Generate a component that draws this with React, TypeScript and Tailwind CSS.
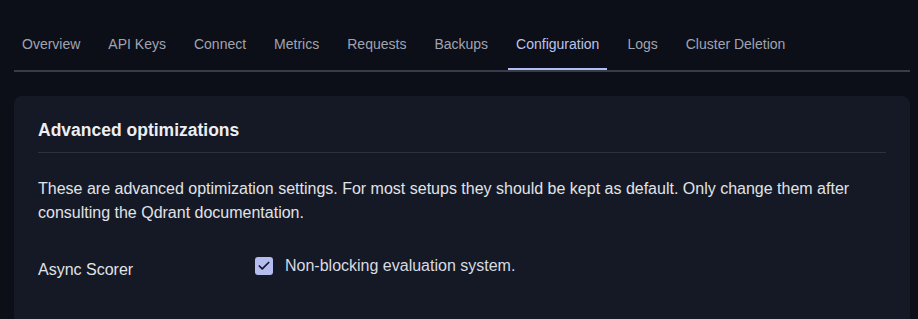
import { Check } from "lucide-react";

const tabs = [
  "Overview",
  "API Keys",
  "Connect",
  "Metrics",
  "Requests",
  "Backups",
  "Configuration",
  "Logs",
  "Cluster Deletion",
];

export default function App() {
  const active = "Configuration";

  return (
    <div
      className="min-h-screen bg-[#0c0e18] pl-[14px] pr-[8px] pt-5 text-[#e4e6ec]"
      style={{ fontFamily: '"Liberation Sans", Arial, sans-serif' }}
    >
      {/* tabs */}
      <nav className="flex gap-3 border-b-2 border-[#383c49]">
        {tabs.map((t) => (
          <button
            key={t}
            className={`border-b-2 px-2 pb-[14px] pt-[14px] text-sm leading-5 ${
              t === active
                ? "border-[#b5bdf0] text-[#bcc4ec]"
                : "border-transparent text-[#a0a4b1]"
            }`}
          >
            {t}
          </button>
        ))}
      </nav>

      {/* card */}
      <section className="mt-6 rounded-lg bg-[#141925] px-6 pb-16 pt-5">
        <h2 className="border-b border-[#2c313e] pb-2 text-[17.5px] font-bold leading-7 text-[#eceef3]">
          Advanced optimizations
        </h2>

        <p className="mt-6 text-base leading-6 text-[#e1e3e8]">
          These are advanced optimization settings. For most setups they should be kept as default. Only change them after
          consulting the Qdrant documentation.
        </p>

        <div className="mt-[25px] flex">
          <div className="w-[217px] pt-2 text-base leading-6 text-[#e1e3e8]">Async Scorer</div>
          <label className="flex items-center gap-3 text-base leading-6 text-[#d9dbe2]">
            <span className="flex h-[18px] w-[18px] items-center justify-center rounded-[3px] bg-[#b5bcef]">
              <Check size={14} strokeWidth={3} className="text-[#141925]" />
            </span>
            Non-blocking evaluation system.
          </label>
        </div>
      </section>
    </div>
  );
}
